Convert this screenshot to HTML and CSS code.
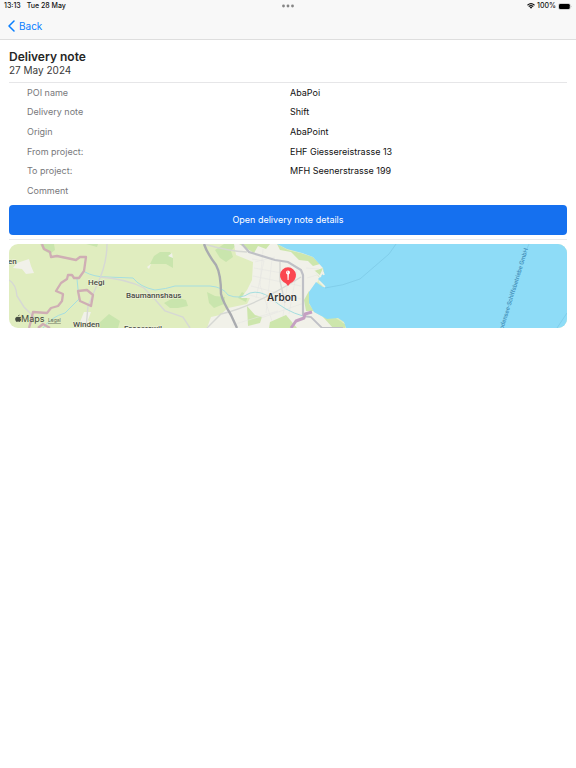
FILE: index.html
```html
<!DOCTYPE html>
<html lang="en">
<head>
<meta charset="utf-8">
<meta name="viewport" content="width=device-width, initial-scale=1">
<title>Delivery note</title>
<link rel="stylesheet" href="styles.css">
</head>
<body>
<header class="topbar">
  <div class="status">
    <div class="status-left"><span>13:13</span><span>Tue 28 May</span></div>
    <svg class="dots" viewBox="0 0 12 4" aria-hidden="true"><circle cx="1.5" cy="2" r="1.4"/><circle cx="6" cy="2" r="1.4"/><circle cx="10.5" cy="2" r="1.4"/></svg>
    <div class="status-right">
      <svg class="wifi" viewBox="0 0 16 12" aria-hidden="true"><path d="M1 4.5Q8-2 15 4.5M3.500 7.200Q8 3 12.500 7.200" fill="none" stroke="#111" stroke-width="2.200"/><path d="M5.300 8.700Q8 6.600 10.700 8.700L8 11.600Z" fill="#111"/></svg>
      <span>100%</span>
      <svg class="battery" viewBox="0 0 28 14" aria-hidden="true"><rect x="1" y="1" width="23.500" height="12" rx="3.500" fill="none" stroke="#aaa"/><rect x="2" y="2" width="21.500" height="10" rx="2.500"/><path d="M25.800 5Q28 7 25.800 9Z" fill="#999"/></svg>
    </div>
  </div>
  <nav class="nav">
    <a class="back" href="#"><svg viewBox="0 0 7 12" aria-hidden="true"><path d="M6 1L1 6L6 11"/></svg>Back</a>
  </nav>
</header>
<main class="page">
  <div class="heading">
    <h1>Delivery note</h1>
    <p>27 May 2024</p>
  </div>
  <dl class="details">
    <div><dt>POI name</dt><dd>AbaPoi</dd></div>
    <div><dt>Delivery note</dt><dd>Shift</dd></div>
    <div><dt>Origin</dt><dd>AbaPoint</dd></div>
    <div><dt>From project:</dt><dd>EHF Giessereistrasse 13</dd></div>
    <div><dt>To project:</dt><dd>MFH Seenerstrasse 199</dd></div>
    <div><dt>Comment</dt><dd></dd></div>
  </dl>
  <div class="action"><button class="open" type="button">Open delivery note details</button></div>
  <svg class="map" viewBox="9 244 558 84" role="img" aria-label="Map of Arbon">
    <rect x="9" y="244" width="558" height="84" fill="#e0edbf"/>
    <g fill="#c9e5ad">
      <path d="M40 244H54L55 250L50 254L43 250Z"/>
      <path d="M86 244H98L97 247Z"/>
      <path d="M154 256L160 252L170 252L173 257L173 268L166 264L150 264Z"/>
      <path d="M164 303L175 297L186 300L188 306L178 308L170 308Z"/>
      <path d="M99 323L109 314L120 321L118 328H98Z"/>
      <path d="M215 250L224 244H237L231 251L233 257L226 262L220 258Z"/>
      <path d="M238 298L242 292L248 296L246 302Z"/>
      <path d="M207 292L215 296L225 297L224 304L214 308L209 303Z"/>
    </g>
    <g fill="#f1f1e9">
      <path d="M17 263L29 259L31 266L34 273L26 274L22 269L13 268Z"/>
      <path d="M147 267L151 264L149 269Z"/><path d="M168 256L172 253L173 258Z"/>
      <path d="M80 322L84 312L91 312L88 320L94 328H82Z"/>
      <path d="M234 244H277L288 250L304 253L315 257L323 268V274L318 281L309 292L309 304L314 312L327 319L345 323V328H207L211 317L220 315L228 308L247 304L250 298L241 298L247 290L252 280L253 262L236 255Z"/>
    </g>
    <g fill="#cde6ac">
      <path d="M239 244H270L266 249L258 246L254 253L246 248Z"/>
      <path d="M277 244L288 250L301 253L313 257L320 264L313 266L308 261L299 260L291 252L280 250Z"/>
      <path d="M314 271L323 268L319 277Z"/>
      <path d="M304 300L309 291V304L314 311L306 311Z"/>
      <path d="M323 317L334 317L345 324V328H333Z"/>
      <path d="M270 322L286 315L297 328H269Z"/>
      <path d="M247 306L255 315L262 317L260 323L248 326Z"/>
    </g>
    <path d="M277 244L287 249L302 253L313 257L323 268L324 273L318 279L324 285L325 287L323 287L316 282L309 292L309 303L314 312L327 319L338 318L344 322L346 328H567V244Z" fill="#8edcf7"/>
    <path d="M314 271L321 277M319 281L325 287M323 272L324 275" fill="none" stroke="#f1f1e9" stroke-width="1.500"/>
    <path d="M255 262L275 257M254 268L293 275M253 276L301 286M251 286L301 299M246 294L278 303M252 259L264 261L256 298M263 249L260 285L272 321M272 259L266 313M290 266L283 316M297 270L289 314M261 318L304 303M232 325L278 311M306 268L319 269M307 278L317 275" fill="none" stroke="#e6e6e2" stroke-width=".6"/>
    <g fill="none" stroke="#a5dee0" stroke-width="1">
      <path d="M85 272Q94 277 107 277L133 278Q140 287 155 290Q166 289 175 286H210Q223 287 228 295Q240 300 250 293Q260 290 271 298Q285 311 303 316"/>
      <path d="M77 279L79 299L65 313Q51 317 43 328"/>
    </g>
    <g fill="none" stroke="#d6d8d4" stroke-width="1.400">
      <path d="M107 244Q107 264 97 285L88 306L86 328"/>
      <path d="M100 277Q127 279 144 288Q156 300 165 311L183 317L190 328"/>
      <path d="M9 280Q16 284 17 296L24 307L35 318"/>
      <path d="M204 244Q228 251 247 252M207 328L221 314Q255 306 301 277"/>
      <path d="M280 262V281L285 303"/>
    </g>
    <path d="M242 244L249 252L275 260L288 262L301 270L303 275V316" fill="none" stroke="#bfc0c6" stroke-width="2.200"/>
    <path d="M303 316L311 317L322 328H343" fill="none" stroke="#bfc0c6" stroke-width="1.800"/>
    <path d="M204 244Q207 253 216 265Q221 274 221 294Q223 302 231 315L237 328" fill="none" stroke="#a9abaf" stroke-width="2.400"/>
    <g fill="none" stroke="#cfaeb4" stroke-width="2.300" stroke-linejoin="round">
      <path d="M42 244L44 249L50 252L51 257L57 256L76 260L80 257L86 257L84 271L79 278L74 278L72 275H68L67 279L61 283L56 291L63 294L62 301L58 306L51 308L47 313L33 312L31 321L29 328"/>
      <path d="M78 291L87 290L93 295L91 306L80 301Z"/><path d="M38 328L43 324L50 328"/>
      <path d="M291 328L296 321L304 318L305 314L312 312" stroke="#c4a0c2" stroke-width="3"/>
    </g>
    <g fill="none" stroke="#7bc7e4" stroke-width=".7"><path d="M325 288Q343 286 360 279L389 254L396 244M529 244L527 249M567 313L557 328"/></g>
    <g class="places">
      <text x="8" y="264">en</text><text x="88" y="285">Hegi</text><text x="126" y="298">Baumannshaus</text><text x="73" y="327">Winden</text><text x="124" y="331">Fasserswil</text>
    </g>
    <text class="town" x="282" y="301">Arbon</text>
    <text class="ferry" transform="translate(528 249) rotate(-73)">Bodensee-Schiffsbetriebe GmbH</text>
    <path d="M281.500 280A8 8 0 1 1 294.500 280Q292 283 290 283.500L288 286L286 283.500Q284 283 281.500 280Z" fill="#fb4650"/>
    <circle cx="288" cy="272.500" r="2" fill="#fff"/><path d="M287.300 274H288.900L288.600 280H287.600Z" fill="#fff"/><circle cx="287.500" cy="272" r=".5" fill="#fb4650"/>
    <path d="M19.500 317Q20.400 316.400 21 317.300Q19.800 318.500 21.200 319.800Q20.300 322.500 18.900 321.800Q18 321.400 17.200 321.800Q15.900 322.300 15.200 319.800Q14.800 317.500 16.500 316.900Q17.300 316.700 18.100 317.100ZM18 316.500Q18 315 19.600 314.600Q19.600 316.200 18 316.500Z" fill="#454b40"/>
    <text class="brand" x="21" y="322">Maps</text><text class="legal" x="48" y="322">Legal</text>
  </svg>
</main>
</body>
</html>
```
FILE: styles.css
```css
* { box-sizing: border-box; }
body {
  margin: 0;
  background: #fff;
  color: #111;
  font: 9px/12px Inter, "Liberation Sans", sans-serif;
}
.topbar {
  background: #f8f8f8;
  border-bottom: 1px solid #dedede;
}
.status {
  display: grid;
  grid-template-columns: 1fr auto 1fr;
  align-items: center;
  height: 12px;
  padding: 0 4px;
  font-size: 7px;
  font-weight: 500;
}
.status-left { display: flex; gap: 6px; }
.status-right { display: flex; align-items: center; justify-content: flex-end; gap: 2px; }
.dots { width: 12px; height: 4px; fill: #858585; }
.wifi { width: 8px; height: 6px; }
.battery { width: 14px; height: 7px; }
.nav { display: flex; padding: 7px 8px 6px; }
.back {
  display: inline-flex;
  align-items: center;
  gap: 4px;
  height: 14px;
  color: #087eff;
  font-size: 10px;
  text-decoration: none;
}
.back svg {
  width: 7px;
  height: 12px;
  fill: none;
  stroke: currentColor;
  stroke-width: 1.5;
  stroke-linecap: round;
  stroke-linejoin: round;
}
.page { padding: 10px 9px 0; }
.heading {
  padding-bottom: 5px;
  border-bottom: 1px solid #e6e6e8;
}
h1 {
  margin: 0;
  font-size: 12px;
  line-height: 14px;
  font-weight: 600;
  color: #262626;
}
.heading p { margin: 0; font-size: 10px; line-height: 13px; color: #3b3b3b; }
.details {
  display: grid;
  grid-auto-rows: 1fr;
  min-height: 118px;
  margin: 0;
}
.details div {
  display: grid;
  grid-template-columns: 1fr 1fr;
  gap: 4px;
  align-items: center;
}
dt { padding-left: 18px; color: #78787b; }
dd { margin: 0; }
.action {
  padding: 4px 0;
  border-bottom: 1px solid #ebebed;
}
.open {
  display: block;
  width: 100%;
  padding: 9px;
  border: 0;
  border-radius: 4px;
  background: #1570ef;
  color: #fff;
  font: inherit;
}
.map {
  display: block;
  width: 100%;
  margin-top: 4px;
  border-radius: 9px;
}
.places {
  font-family: Roboto, sans-serif;
  font-size: 8px;
  font-weight: 500;
  fill: #484c43;
  stroke: #f2f5df;
  stroke-width: 1;
  paint-order: stroke;
}
.town {
  font-size: 10px;
  font-weight: 600;
  text-anchor: middle;
  fill: #333;
  stroke: #f7f7f1;
  stroke-width: 1;
  paint-order: stroke;
}
.ferry {
  font-family: Roboto, sans-serif;
  font-size: 6px;
  font-weight: 500;
  text-anchor: end;
  fill: #438fb9;
}
.brand { font-size: 9px; fill: #454b40; }
.legal { font-size: 5px; fill: #62695a; text-decoration: underline; }
```
